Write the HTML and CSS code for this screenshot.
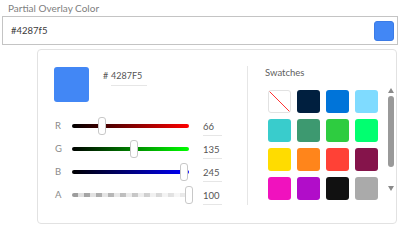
FILE: index.html
```html
<!DOCTYPE html>
<html lang="en">
<head>
    <meta charset="UTF-8">
    <meta name="viewport" content="width=device-width, initial-scale=1.0">
    <title>Partial Overlay Color</title>
    <link rel="stylesheet" href="styles.css">
</head>
<body>

    <div class="wrap">
        <div class="field-label">Partial Overlay Color</div>
        <div class="field">
            <span class="field-value">#4287f5</span>
            <span class="field-chip"></span>
        </div>

        <div class="picker">
            <!-- left side: preview + sliders -->
            <div class="picker-main">
                <div class="preview-row">
                    <div class="preview"></div>
                    <div class="hex">
                        <span class="hash">#</span>
                        <span class="hex-input">4287F5</span>
                    </div>
                </div>

                <div class="slider-row">
                    <span class="channel">R</span>
                    <div class="track track-r">
                        <span class="thumb" style="left: 25.9%"></span>
                    </div>
                    <span class="num">66</span>
                </div>
                <div class="slider-row">
                    <span class="channel">G</span>
                    <div class="track track-g">
                        <span class="thumb" style="left: 52.9%"></span>
                    </div>
                    <span class="num">135</span>
                </div>
                <div class="slider-row">
                    <span class="channel">B</span>
                    <div class="track track-b">
                        <span class="thumb" style="left: 96.1%"></span>
                    </div>
                    <span class="num">245</span>
                </div>
                <div class="slider-row">
                    <span class="channel">A</span>
                    <div class="track track-a">
                        <span class="thumb" style="left: 100%"></span>
                    </div>
                    <span class="num">100</span>
                </div>
            </div>

            <!-- right side: swatches -->
            <div class="picker-swatches">
                <div class="swatch-title">Swatches</div>
                <div class="swatch-body">
                    <div class="swatch-grid">
                        <span class="swatch none"></span>
                        <span class="swatch c-navy"></span>
                        <span class="swatch c-blue"></span>
                        <span class="swatch c-aqua"></span>
                        <span class="swatch c-teal"></span>
                        <span class="swatch c-olive"></span>
                        <span class="swatch c-green"></span>
                        <span class="swatch c-lime"></span>
                        <span class="swatch c-yellow"></span>
                        <span class="swatch c-orange"></span>
                        <span class="swatch c-red"></span>
                        <span class="swatch c-maroon"></span>
                        <span class="swatch c-fuchsia"></span>
                        <span class="swatch c-purple"></span>
                        <span class="swatch c-black"></span>
                        <span class="swatch c-gray"></span>
                    </div>
                    <div class="scrollbar">
                        <span class="arrow up"></span>
                        <span class="scroll-thumb"></span>
                        <span class="arrow down"></span>
                    </div>
                </div>
            </div>
        </div>
    </div>

</body>
</html>
```

FILE: styles.css
```css
* {
    margin: 0;
    padding: 0;
    box-sizing: border-box;
}

body {
    font-family: 'Lato', 'Open Sans', sans-serif;
    background-color: #fff;
    color: #4b4b4b;
}

.wrap {
    padding: 2px 2px 0 2px;
}

.field-label {
    font-size: 10px;
    color: #808080;
    padding-left: 6px;
    height: 14px;
    line-height: 13px;
}

.field {
    height: 29px;
    border: 1px solid #c4c4c4;
    display: flex;
    align-items: center;
    justify-content: space-between;
    padding: 0 3px 0 8px;
}

.field-value {
    font-size: 9.5px;
    color: #3a3a3a;
}

.field-chip {
    width: 20px;
    height: 20px;
    border-radius: 3px;
    background-color: #4287f5;
    border: 1px solid #3b7be6;
}

/* popover */
.picker {
    margin: 4px 1px 0 35px;
    height: 175px;
    border: 1px solid #e2e2e2;
    border-radius: 4px;
    display: flex;
}

.picker-main {
    width: 209px;
    padding: 17px 0 0 16px;
}

.preview-row {
    display: flex;
    height: 47px;
}

.preview {
    width: 35px;
    height: 35px;
    border-radius: 3px;
    background-color: #4287f5;
}

.hex {
    display: flex;
    margin-left: 14px;
    padding-top: 3px;
    font-size: 9px;
    color: #555;
}

.hash {
    width: 8px;
}

.hex-input {
    width: 36px;
    height: 16px;
    border-bottom: 1px solid #e6e6e6;
}

.slider-row {
    display: flex;
    align-items: center;
    height: 23px;
}

.channel {
    width: 18px;
    padding-left: 1px;
    font-size: 9.5px;
    color: #8a8a8a;
}

.track {
    position: relative;
    width: 117px;
    height: 4px;
    border-radius: 2px;
}

.track-r {
    background: linear-gradient(to right, #000, #f00);
}

.track-g {
    background: linear-gradient(to right, #000, #0f0);
}

.track-b {
    background: linear-gradient(to right, #000, #00f);
}

.track-a {
    background:
        linear-gradient(to right, rgba(255, 255, 255, 0.1), rgba(255, 255, 255, 0.85)),
        repeating-linear-gradient(to right, #8f8f8f 0 6px, #d9d9d9 6px 12px);
}

.thumb {
    position: absolute;
    top: 50%;
    width: 8px;
    height: 18px;
    transform: translate(-50%, -50%);
    background-color: #fff;
    border: 1px solid #c8c8c8;
    border-radius: 3px;
}

.num {
    margin-left: 14px;
    width: 19px;
    height: 17px;
    padding-top: 2px;
    margin-top: 3px;
    font-size: 9.5px;
    color: #555;
    border-bottom: 1px solid #e6e6e6;
}

/* swatches */
.picker-swatches {
    flex: 1;
    margin: 16px 0 18px 0;
    border-left: 1px solid #e6e6e6;
    padding-left: 17px;
}

.swatch-title {
    font-size: 9.5px;
    color: #606060;
    height: 24px;
    padding-top: 1px;
}

.swatch-body {
    display: flex;
}

.swatch-grid {
    display: grid;
    grid-template-columns: repeat(4, 23px);
    gap: 6px;
    margin-left: 3px;
}

.swatch {
    width: 23px;
    height: 23px;
    border-radius: 3px;
}

.swatch.none {
    border: 1px solid #e2e2e2;
    background: linear-gradient(to top right, transparent calc(50% - 0.5px), #f33 50%, transparent calc(50% + 0.5px));
}

.c-navy { background-color: #001f3f; }
.c-blue { background-color: #0074d9; }
.c-aqua { background-color: #7fdbff; }
.c-teal { background-color: #39cccc; }
.c-olive { background-color: #3d9970; }
.c-green { background-color: #2ecc40; }
.c-lime { background-color: #01ff70; }
.c-yellow { background-color: #ffdc00; }
.c-orange { background-color: #ff851b; }
.c-red { background-color: #ff4136; }
.c-maroon { background-color: #85144b; }
.c-fuchsia { background-color: #f012be; }
.c-purple { background-color: #b10dc9; }
.c-black { background-color: #111; }
.c-gray { background-color: #aaa; }

.scrollbar {
    margin-left: 9px;
    width: 8px;
    display: flex;
    flex-direction: column;
    align-items: center;
    margin-top: -2px;
}

.arrow {
    width: 0;
    height: 0;
    border-left: 3.5px solid transparent;
    border-right: 3.5px solid transparent;
}

.arrow.up {
    border-bottom: 5px solid #8a8a8a;
}

.arrow.down {
    border-top: 5px solid #8a8a8a;
    margin-top: 19px;
}

.scroll-thumb {
    margin-top: 3px;
    width: 6px;
    height: 71px;
    border-radius: 3px;
    background-color: #999;
}
```
